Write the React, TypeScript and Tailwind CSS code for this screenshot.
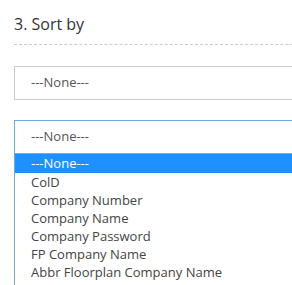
const OPTIONS = [
  "ColD",
  "Company Number",
  "Company Name",
  "Company Password",
  "FP Company Name",
  "Abbr Floorplan Company Name",
  "Company Address",
];

export default function App() {
  return (
    <div
      className="w-[292px] h-[285px] overflow-hidden bg-white pl-[14px] text-[#333]"
      style={{ fontFamily: '"Open Sans", "Noto Sans", sans-serif' }}
    >
      {/* Section heading */}
      <div className="pt-[13px] h-[44px] text-[16px] leading-[22px]">3. Sort by</div>
      <div className="w-[400px] border-t border-dashed border-[#cccccc]" />

      {/* Closed select */}
      <div className="mt-[21px] w-[400px] h-[34px] border border-[#cccccc] flex items-center pl-[16px] text-[13px] text-[#555]">
        ---None---
      </div>

      {/* Open select */}
      <div className="mt-[20px] w-[400px] h-[34px] border border-[#66afe9] border-b-[#a0a0a0] flex items-center pl-[16px] text-[13px] text-[#555]">
        ---None---
      </div>
      <div className="w-[400px] border-l border-[#7aa7d8] text-[13px] text-[#444]">
        <div className="h-[19px] bg-[#1e90ff] text-white pl-[16px] leading-[19px]">---None---</div>
        {OPTIONS.map((o) => (
          <div key={o} className="h-[18px] pl-[16px] leading-[18px]">
            {o}
          </div>
        ))}
      </div>
    </div>
  );
}
